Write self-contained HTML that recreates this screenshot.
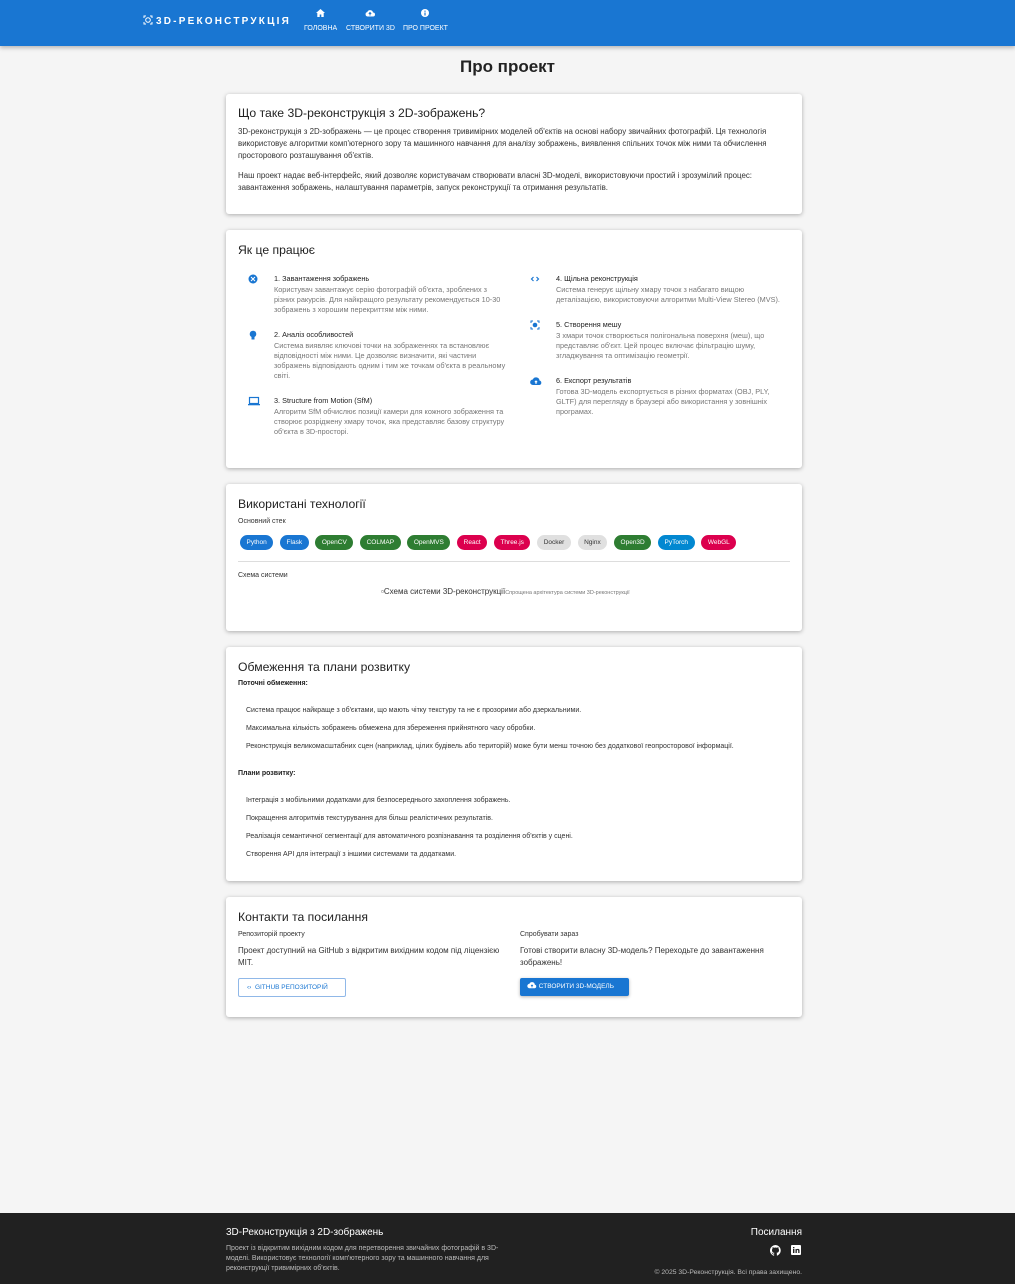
<!DOCTYPE html>
<html><head><meta charset="utf-8"><style>
*{box-sizing:border-box;margin:0;padding:0}
body{width:1015px;height:1284px;background:#f5f5f5;font-family:"Liberation Sans",sans-serif;color:#333;position:relative;overflow:hidden}
.nav{position:absolute;left:0;top:0;width:1015px;height:46px;background:#1976d2;box-shadow:0 2px 4px rgba(0,0,0,.25)}
.brand{position:absolute;left:143px;top:15px;color:#fff;font-weight:bold;font-size:10px;letter-spacing:2.2px}
.ni{position:absolute;top:9px;color:#fff;font-size:7px;text-align:center;white-space:nowrap}
.ni svg{display:block;margin:0 auto 8px}
h1{position:absolute;top:57px;width:1015px;text-align:center;font-size:17px;font-weight:bold;color:#222}
.card{position:absolute;left:226px;width:576px;background:#fff;border-radius:3px;box-shadow:0 1px 4px rgba(0,0,0,.3);padding:0 12px}
.card h2{font-weight:normal;font-size:12.2px;color:#222;position:absolute;left:12px}
.p{font-size:7.9px;line-height:12px;color:#333}
.st{position:absolute;font-size:7.3px;line-height:10px}
.st b{font-weight:normal;color:#222;display:block;margin-bottom:1px}
.st span{color:#777;display:block}
.st svg{position:absolute;left:-26px;top:0}
.chip{display:inline-block;height:15px;line-height:15px;border-radius:8px;padding:0 6.5px;font-size:6.5px;color:#fff;margin-right:6.8px}
.li{position:absolute;left:20px;font-size:7px;color:#333}
.ft{position:absolute;left:0;top:1213px;width:1015px;height:71px;background:#212121;color:#fff}
</style></head><body>
<div class="nav">
<div class="brand"><svg width="10" height="10" viewBox="0 0 10 10" style="vertical-align:-1px;margin-right:3px"><path d="M1 3V1h2M7 1h2v2M9 7v2H7M3 9H1V7" stroke="#fff" fill="none" stroke-width="1"/><circle cx="5" cy="5" r="2.3" stroke="#fff" fill="none"/></svg>3D-РЕКОНСТРУКЦІЯ</div>
<div class="ni" style="left:304px"><svg width="9" height="8" viewBox="0 0 9 8"><path d="M4.5 0L0 4h1.3v4h2.4V5.5h1.6V8h2.4V4H9z" fill="#fff"/></svg>ГОЛОВНА</div>
<div class="ni" style="left:346px"><svg width="10" height="8" viewBox="0 0 10 8"><path d="M2.5 7.5h5.5a2 2 0 0 0 0-4A3 3 0 0 0 2.3 3 2.3 2.3 0 0 0 2.5 7.5z" fill="#fff"/><path d="M5 3.5v3M3.8 4.8L5 3.5l1.2 1.3" stroke="#1976d2" fill="none"/></svg>СТВОРИТИ 3D</div>
<div class="ni" style="left:403px"><svg width="8" height="8"><circle cx="4" cy="4" r="4" fill="#fff"/><rect x="3.4" y="3.5" width="1.2" height="3" fill="#1976d2"/><rect x="3.4" y="1.6" width="1.2" height="1.2" fill="#1976d2"/></svg>ПРО ПРОЕКТ</div>
</div>
<h1>Про проект</h1>

<div class="card" style="top:94px;height:120px">
<h2 style="top:12px">Що таке 3D-реконструкція з 2D-зображень?</h2>
<div class="p" style="position:absolute;left:12px;top:32px;width:548px">3D-реконструкція з 2D-зображень — це процес створення тривимірних моделей об'єктів на основі набору звичайних фотографій. Ця технологія використовує алгоритми комп'ютерного зору та машинного навчання для аналізу зображень, виявлення спільних точок між ними та обчислення просторового розташування об'єктів.</div>
<div class="p" style="position:absolute;left:12px;top:76px;width:548px">Наш проект надає веб-інтерфейс, який дозволяє користувачам створювати власні 3D-моделі, використовуючи простий і зрозумілий процес: завантаження зображень, налаштування параметрів, запуск реконструкції та отримання результатів.</div>
</div>

<div class="card" style="top:230px;height:238px">
<h2 style="top:13px">Як це працює</h2>
<div class="st" style="left:48px;top:44px;width:232px"><svg width="10" height="10"><circle cx="5" cy="5" r="4.5" fill="#1976d2"/><path d="M3 3l4 4M7 3L3 7" stroke="#fff" stroke-width="1"/></svg><b>1. Завантаження зображень</b><span>Користувач завантажує серію фотографій об'єкта, зроблених з різних ракурсів. Для найкращого результату рекомендується 10-30 зображень з хорошим перекриттям між ними.</span></div>
<div class="st" style="left:48px;top:100px;width:232px"><svg width="10" height="10"><circle cx="5" cy="4" r="3.3" fill="#1976d2"/><rect x="3.5" y="7" width="3" height="2.5" fill="#1976d2"/></svg><b>2. Аналіз особливостей</b><span>Система виявляє ключові точки на зображеннях та встановлює відповідності між ними. Це дозволяє визначити, які частини зображень відповідають одним і тим же точкам об'єкта в реальному світі.</span></div>
<div class="st" style="left:48px;top:166px;width:232px"><svg width="12" height="10"><rect x="1.5" y="1.5" width="9" height="6" fill="none" stroke="#1976d2" stroke-width="1.2"/><rect x="0" y="8" width="12" height="1.3" fill="#1976d2"/></svg><b>3. Structure from Motion (SfM)</b><span>Алгоритм SfM обчислює позиції камери для кожного зображення та створює розріджену хмару точок, яка представляє базову структуру об'єкта в 3D-просторі.</span></div>
<div class="st" style="left:330px;top:44px;width:235px"><svg width="10" height="10"><path d="M3.5 3L1.5 5l2 2M6.5 3l2 2-2 2" stroke="#1976d2" fill="none" stroke-width="1.2"/></svg><b>4. Щільна реконструкція</b><span>Система генерує щільну хмару точок з набагато вищою деталізацією, використовуючи алгоритми Multi-View Stereo (MVS).</span></div>
<div class="st" style="left:330px;top:90px;width:232px"><svg width="10" height="10"><path d="M1 3V1h2M7 1h2v2M9 7v2H7M3 9H1V7" stroke="#1976d2" fill="none"/><circle cx="5" cy="5" r="2.3" fill="#1976d2"/></svg><b>5. Створення мешу</b><span>З хмари точок створюється полігональна поверхня (меш), що представляє об'єкт. Цей процес включає фільтрацію шуму, згладжування та оптимізацію геометрії.</span></div>
<div class="st" style="left:330px;top:146px;width:225px"><svg width="12" height="10"><path d="M3 9h6.5a2.3 2.3 0 0 0 0-4.5A3.5 3.5 0 0 0 2.8 3.5 2.7 2.7 0 0 0 3 9z" fill="#1976d2"/><path d="M6 5v3M4.8 6.2L6 5l1.2 1.2" stroke="#fff" fill="none"/></svg><b>6. Експорт результатів</b><span>Готова 3D-модель експортується в різних форматах (OBJ, PLY, GLTF) для перегляду в браузері або використання у зовнішніх програмах.</span></div>
</div>

<div class="card" style="top:484px;height:147px">
<h2 style="top:13px">Використані технології</h2>
<div style="position:absolute;left:12px;top:34px;font-size:7px">Основний стек</div>
<div style="position:absolute;left:14px;top:51px;white-space:nowrap;font-size:0">
<span class="chip" style="background:#1976d2">Python</span><span class="chip" style="background:#1976d2">Flask</span><span class="chip" style="background:#2e7d32">OpenCV</span><span class="chip" style="background:#2e7d32">COLMAP</span><span class="chip" style="background:#2e7d32">OpenMVS</span><span class="chip" style="background:#dc004e">React</span><span class="chip" style="background:#dc004e">Three.js</span><span class="chip" style="background:#e0e0e0;color:#333">Docker</span><span class="chip" style="background:#e0e0e0;color:#333">Nginx</span><span class="chip" style="background:#2e7d32">Open3D</span><span class="chip" style="background:#0288d1">PyTorch</span><span class="chip" style="background:#dc004e">WebGL</span></div>
<div style="position:absolute;left:12px;right:12px;top:77px;border-top:1px solid #ddd"></div>
<div style="position:absolute;left:12px;top:88px;font-size:7px">Схема системи</div>
<div style="position:absolute;left:155px;top:103px;font-size:8px;color:#333">▫Схема системи 3D-реконструкції<span style="font-size:5.5px;color:#777">Спрощена архітектура системи 3D-реконструкції</span></div>
</div>

<div class="card" style="top:647px;height:234px">
<h2 style="top:13px">Обмеження та плани розвитку</h2>
<div style="position:absolute;left:12px;top:33px;font-size:7px;font-weight:bold;color:#222">Поточні обмеження:</div>
<div class="li" style="top:60px">Система працює найкраще з об'єктами, що мають чітку текстуру та не є прозорими або дзеркальними.</div>
<div class="li" style="top:78px">Максимальна кількість зображень обмежена для збереження прийнятного часу обробки.</div>
<div class="li" style="top:96px">Реконструкція великомасштабних сцен (наприклад, цілих будівель або територій) може бути менш точною без додаткової геопросторової інформації.</div>
<div style="position:absolute;left:12px;top:123px;font-size:7px;font-weight:bold;color:#222">Плани розвитку:</div>
<div class="li" style="top:150px">Інтеграція з мобільними додатками для безпосереднього захоплення зображень.</div>
<div class="li" style="top:168px">Покращення алгоритмів текстурування для більш реалістичних результатів.</div>
<div class="li" style="top:186px">Реалізація семантичної сегментації для автоматичного розпізнавання та розділення об'єктів у сцені.</div>
<div class="li" style="top:204px">Створення API для інтеграції з іншими системами та додатками.</div>
</div>

<div class="card" style="top:897px;height:120px">
<h2 style="top:13px">Контакти та посилання</h2>
<div style="position:absolute;left:12px;top:34px;font-size:7px">Репозиторій проекту</div>
<div class="p" style="position:absolute;left:12px;top:48px;width:272px;font-size:8px">Проект доступний на GitHub з відкритим вихідним кодом під ліцензією MIT.</div>
<div style="position:absolute;left:12px;top:81px;width:108px;height:19px;border:1px solid #90b8e8;border-radius:2px;color:#1976d2;font-size:6.5px;line-height:17px;padding-left:8px">‹› &nbsp;GITHUB РЕПОЗИТОРІЙ</div>
<div style="position:absolute;left:294px;top:34px;font-size:7px">Спробувати зараз</div>
<div class="p" style="position:absolute;left:294px;top:48px;width:262px;font-size:8px">Готові створити власну 3D-модель? Переходьте до завантаження зображень!</div>
<div style="position:absolute;left:294px;top:81px;width:109px;height:18px;background:#1976d2;border-radius:2px;color:#fff;font-size:6.5px;line-height:18px;padding-left:7px;box-shadow:0 1px 3px rgba(0,0,0,.3)"><svg width="10" height="8" viewBox="0 0 12 10" style="vertical-align:-1px"><path d="M3 9h6.5a2.3 2.3 0 0 0 0-4.5A3.5 3.5 0 0 0 2.8 3.5 2.7 2.7 0 0 0 3 9z" fill="#fff"/><path d="M6 5v3M4.8 6.2L6 5l1.2 1.2" stroke="#1976d2" fill="none"/></svg> СТВОРИТИ 3D-МОДЕЛЬ</div>
</div>

<div class="ft">
<div style="position:absolute;left:226px;top:14px;font-size:10px">3D-Реконструкція з 2D-зображень</div>
<div style="position:absolute;left:226px;top:31px;width:276px;font-size:7px;line-height:10px;color:#bbb">Проект із відкритим вихідним кодом для перетворення звичайних фотографій в 3D-моделі. Використовує технології комп'ютерного зору та машинного навчання для реконструкції тривимірних об'єктів.</div>
<div style="position:absolute;right:213px;top:14px;font-size:10px">Посилання</div>
<svg style="position:absolute;left:770px;top:32px" width="11" height="11" viewBox="0 0 16 16"><path fill="#fff" d="M8 0a8 8 0 0 0-2.5 15.6c.4 0 .5-.2.5-.4v-1.5c-2.2.5-2.7-1-2.7-1-.4-.9-.9-1.2-.9-1.2-.7-.5.1-.5.1-.5.8.1 1.2.8 1.2.8.7 1.3 1.9.9 2.3.7.1-.5.3-.9.5-1.1-1.8-.2-3.6-.9-3.6-4 0-.9.3-1.6.8-2.1-.1-.2-.4-1 .1-2.1 0 0 .7-.2 2.2.8a7.5 7.5 0 0 1 4 0c1.5-1 2.2-.8 2.2-.8.4 1.1.2 1.9.1 2.1.5.6.8 1.3.8 2.1 0 3.1-1.9 3.7-3.6 3.9.3.3.5.8.5 1.5v2.2c0 .2.1.5.6.4A8 8 0 0 0 8 0z"/></svg>
<svg style="position:absolute;left:791px;top:32px" width="10" height="10" viewBox="0 0 10 10"><rect width="10" height="10" rx="1" fill="#fff"/><rect x="2" y="4" width="1.4" height="4" fill="#212121"/><rect x="2" y="2" width="1.4" height="1.3" fill="#212121"/><path d="M4.5 8V4h1.3v.6c.6-1 2.7-1 2.7.8V8H7.2V5.7c0-1-1.4-1-1.4 0V8z" fill="#212121"/></svg>
<div style="position:absolute;right:213px;top:56px;font-size:6.8px;color:#bbb">© 2025 3D-Реконструкція. Всі права захищено.</div>
</div>
</body></html>
